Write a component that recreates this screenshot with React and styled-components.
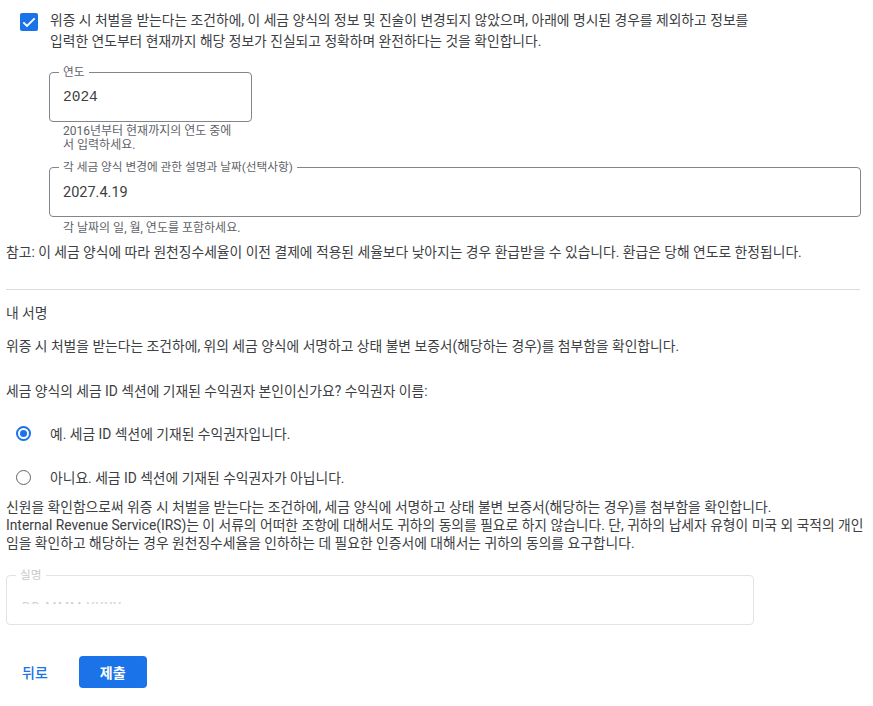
import React from "react";
import styled, { createGlobalStyle } from "styled-components";

const Global = createGlobalStyle`
  html, body { margin: 0; padding: 0; background: #fff; }
  body {
    font-family: Roboto, "Noto Sans CJK KR", "Noto Sans", sans-serif;
    color: #3c4043;
    -webkit-font-smoothing: antialiased;
  }
`;

const Page = styled.div`
  width: 854px;
  padding: 10px 0 20px 6px;
  display: flex;
  flex-direction: column;
`;

const CheckRow = styled.div`
  display: flex;
  align-items: flex-start;
  gap: 12px;
  padding-left: 14px;
`;

const CheckBox = styled.span`
  flex: none;
  width: 18px;
  height: 18px;
  margin-top: 3px;
  border-radius: 2px;
  background: #1a73e8;
  display: flex;
  align-items: center;
  justify-content: center;
`;

const Text = styled.p`
  margin: ${(p) => p.$m || "0"};
  font-size: 13.8px;
  line-height: ${(p) => p.$lh || "21px"};
  color: #3c4043;
  white-space: nowrap;
`;

const FieldBlock = styled.div`
  display: flex;
  flex-direction: column;
  margin: ${(p) => p.$m || "0"};
  width: ${(p) => p.$w};
`;

const Box = styled.div`
  position: relative;
  box-sizing: border-box;
  height: 50px;
  border: 1px solid ${(p) => (p.$faint ? "#e3e3e3" : "#80868b")};
  border-radius: 4px;
  padding: 0 13px;
  display: flex;
  align-items: center;
`;

const Label = styled.span`
  position: absolute;
  top: -8px;
  left: 9px;
  padding: 0 4px;
  background: #fff;
  font-size: 11.7px;
  line-height: 14px;
  color: ${(p) => (p.$faint ? "#c9c9c9" : "#5f6368")};
`;

const Value = styled.span`
  font-size: 14.5px;
  color: #3c4043;
  font-family: ${(p) =>
    p.$mono
      ? '"Liberation Mono", "DejaVu Sans Mono", monospace'
      : 'Roboto, "Noto Sans CJK KR", sans-serif'};
`;

const Ghost = styled.span`
  display: block;
  height: 2px;
  overflow: hidden;
  margin-top: 6px;
  margin-left: 2px;
  font-size: 13px;
  line-height: 16px;
  color: #d0d0d0;
  letter-spacing: 1px;
`;

const GhostInner = styled.span`
  display: block;
  margin-top: -3px;
`;

const Helper = styled.div`
  padding: 0 ${(p) => p.$pr || "14px"} 0 14px;
  margin-top: ${(p) => p.$mt || "2px"};
  font-size: 12px;
  line-height: 14px;
  color: #5f6368;
  word-break: break-all;
`;

const Divider = styled.hr`
  margin: 26px 0 0;
  border: 0;
  border-top: 1px solid #dadce0;
  width: 854px;
`;

const RadioGroup = styled.div`
  display: flex;
  flex-direction: column;
  margin-top: 9px;
`;

const RadioRow = styled.label`
  height: 44px;
  display: flex;
  align-items: center;
  gap: 19px;
  padding-left: 10px;
  font-size: 13.8px;
  color: #3c4043;
`;

const Radio = styled.span`
  flex: none;
  box-sizing: border-box;
  width: 15px;
  height: 15px;
  border-radius: 50%;
  border: ${(p) => (p.$on ? "2px solid #1a73e8" : "1px solid #5f6368")};
  display: flex;
  align-items: center;
  justify-content: center;
  &::after {
    content: "";
    display: ${(p) => (p.$on ? "block" : "none")};
    width: 7px;
    height: 7px;
    border-radius: 50%;
    background: #1a73e8;
  }
`;

const Actions = styled.div`
  display: flex;
  align-items: center;
  gap: 15px;
  margin-top: 31px;
`;

const Button = styled.button`
  height: 32px;
  padding: 0 ${(p) => (p.$primary ? "21px" : "16px")};
  border: 0;
  border-radius: 4px;
  font-family: Roboto, "Noto Sans CJK KR", sans-serif;
  font-size: 14px;
  font-weight: ${(p) => (p.$primary ? 700 : 500)};
  background: ${(p) => (p.$primary ? "#1a73e8" : "transparent")};
  color: ${(p) => (p.$primary ? "#fff" : "#1a73e8")};
  cursor: pointer;
`;

export default function App() {
  return (
    <>
      <Global />
      <Page>
        <CheckRow>
          <CheckBox>
            <svg width="16" height="16" viewBox="0 0 24 24">
              <path d="M3.5 12.5l5.5 5.5L20.5 6.5" fill="none" stroke="#fff" strokeWidth="2.8" />
            </svg>
          </CheckBox>
          <Text>
            위증 시 처벌을 받는다는 조건하에, 이 세금 양식의 정보 및 진술이 변경되지 않았으며, 아래에 명시된 경우를 제외하고 정보를
            <br />
            입력한 연도부터 현재까지 해당 정보가 진실되고 정확하며 완전하다는 것을 확인합니다.
          </Text>
        </CheckRow>

        <FieldBlock $w="203px" $m="20px 0 0 43px">
          <Box>
            <Label>연도</Label>
            <Value $mono>2024</Value>
          </Box>
          <Helper $pr="18px">2016년부터 현재까지의 연도 중에서 입력하세요.</Helper>
        </FieldBlock>

        <FieldBlock $w="812px" $m="15px 0 0 43px">
          <Box>
            <Label>각 세금 양식 변경에 관한 설명과 날짜(선택사항)</Label>
            <Value>2027.4.19</Value>
          </Box>
          <Helper $mt="4px">각 날짜의 일, 월, 연도를 포함하세요.</Helper>
        </FieldBlock>

        <Text $m="7px 0 0">
          참고: 이 세금 양식에 따라 원천징수세율이 이전 결제에 적용된 세율보다 낮아지는 경우 환급받을 수 있습니다. 환급은 당해 연도로 한정됩니다.
        </Text>

        <Divider />

        <Text $m="13px 0 0">내 서명</Text>
        <Text $m="12px 0 0">
          위증 시 처벌을 받는다는 조건하에, 위의 세금 양식에 서명하고 상태 불변 보증서(해당하는 경우)를 첨부함을 확인합니다.
        </Text>
        <Text $m="24px 0 0">세금 양식의 세금 ID 섹션에 기재된 수익권자 본인이신가요? 수익권자 이름:</Text>

        <RadioGroup>
          <RadioRow>
            <Radio $on />
            예. 세금 ID 섹션에 기재된 수익권자입니다.
          </RadioRow>
          <RadioRow>
            <Radio />
            아니요. 세금 ID 섹션에 기재된 수익권자가 아닙니다.
          </RadioRow>
        </RadioGroup>

        <Text $lh="18px" $m="-1px 0 0">
          신원을 확인함으로써 위증 시 처벌을 받는다는 조건하에, 세금 양식에 서명하고 상태 불변 보증서(해당하는 경우)를 첨부함을 확인합니다.
          <br />
          Internal Revenue Service(IRS)는 이 서류의 어떠한 조항에 대해서도 귀하의 동의를 필요로 하지 않습니다. 단, 귀하의 납세자 유형이 미국 외 국적의 개인
          <br />
          임을 확인하고 해당하는 경우 원천징수세율을 인하하는 데 필요한 인증서에 대해서는 귀하의 동의를 요구합니다.
        </Text>

        <FieldBlock $w="748px" $m="23px 0 0">
          <Box $faint>
            <Label $faint>실명</Label>
            <Ghost>
              <GhostInner>DD MMM YYYY</GhostInner>
            </Ghost>
          </Box>
        </FieldBlock>

        <Actions>
          <Button>뒤로</Button>
          <Button $primary>제출</Button>
        </Actions>
      </Page>
    </>
  );
}
